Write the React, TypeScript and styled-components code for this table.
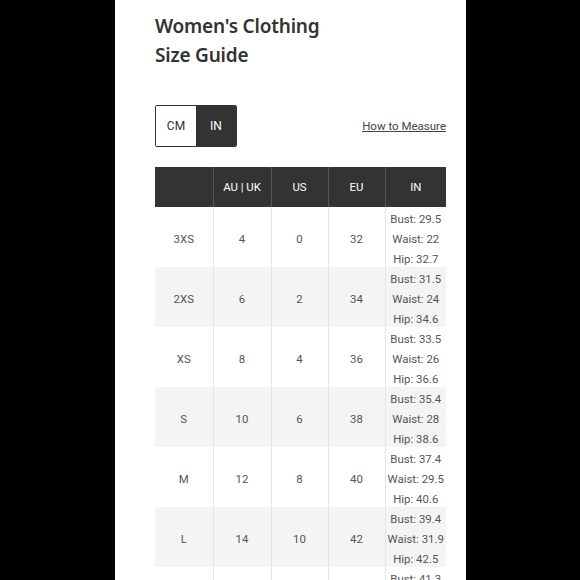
import styled, { createGlobalStyle } from "styled-components";

const GlobalStyle = createGlobalStyle`
  html, body {
    margin: 0;
    padding: 0;
    background: #000;
    height: 100%;
    overflow: hidden;
  }
`;

const Page = styled.div`
  display: flex;
  justify-content: center;
  background: #000;
  min-height: 580px;
`;

const Panel = styled.div`
  width: 351px;
  margin-left: 1px;
  background: #fff;
  padding: 12px 20px 0 40px;
  box-sizing: border-box;
  min-height: 580px;
`;

const Title = styled.h1`
  margin: 0;
  font-family: "Noto Sans", sans-serif;
  font-weight: 600;
  font-size: 19px;
  line-height: 29px;
  color: #333;
  letter-spacing: -0.2px;
`;

const Controls = styled.div`
  display: flex;
  align-items: center;
  justify-content: space-between;
  margin-top: 35px;
`;

const Toggle = styled.div`
  display: flex;
  border: 1px solid #333;
  border-radius: 2px;
  overflow: hidden;
`;

const ToggleButton = styled.div<{ $active?: boolean }>`
  width: 40px;
  height: 40px;
  display: flex;
  align-items: center;
  justify-content: center;
  font-family: Roboto, sans-serif;
  font-size: 12px;
  color: ${(p) => (p.$active ? "#fff" : "#333")};
  background: ${(p) => (p.$active ? "#333" : "#fff")};
`;

const MeasureLink = styled.a`
  font-family: Roboto, sans-serif;
  font-size: 11.5px;
  color: #444;
  text-decoration: underline;
`;

const Table = styled.table`
  margin-top: 20px;
  width: 291px;
  border-collapse: collapse;
  table-layout: fixed;
  font-family: Roboto, sans-serif;
  font-size: 11.4px;
`;

const Th = styled.th`
  background: #333;
  color: #fff;
  font-weight: 400;
  height: 40px;
  padding: 0;
  border-left: 1px solid #555;
  &:first-child {
    border-left: none;
  }
`;

const Row = styled.tr<{ $shaded?: boolean }>`
  background: ${(p) => (p.$shaded ? "#f4f4f4" : "#fff")};
`;

const Td = styled.td`
  text-align: center;
  color: #555;
  padding: 0;
  height: 60px;
  line-height: 20px;
  border-left: 1px solid #e6e6e6;
  &:first-child {
    border-left: none;
  }
`;

const CellText = styled.div`
  margin: 2px 0 -2px;
`;

const sizes = [
  { size: "3XS", au: 4, us: 0, eu: 32, bust: "29.5", waist: "22", hip: "32.7" },
  { size: "2XS", au: 6, us: 2, eu: 34, bust: "31.5", waist: "24", hip: "34.6" },
  { size: "XS", au: 8, us: 4, eu: 36, bust: "33.5", waist: "26", hip: "36.6" },
  { size: "S", au: 10, us: 6, eu: 38, bust: "35.4", waist: "28", hip: "38.6" },
  { size: "M", au: 12, us: 8, eu: 40, bust: "37.4", waist: "29.5", hip: "40.6" },
  { size: "L", au: 14, us: 10, eu: 42, bust: "39.4", waist: "31.9", hip: "42.5" },
  { size: "XL", au: 16, us: 12, eu: 44, bust: "41.3", waist: "33.9", hip: "44.5" },
];

const App = () => {
  return (
    <Page>
      <GlobalStyle />
      <Panel>
        <Title>
          Women's Clothing
          <br />
          Size Guide
        </Title>
        <Controls>
          <Toggle>
            <ToggleButton>CM</ToggleButton>
            <ToggleButton $active>IN</ToggleButton>
          </Toggle>
          <MeasureLink href="#">How to Measure</MeasureLink>
        </Controls>
        <Table>
          <colgroup>
            <col style={{ width: 58 }} />
            <col style={{ width: 58 }} />
            <col style={{ width: 57 }} />
            <col style={{ width: 57 }} />
            <col style={{ width: 61 }} />
          </colgroup>
          <thead>
            <tr>
              <Th></Th>
              <Th>AU | UK</Th>
              <Th>US</Th>
              <Th>EU</Th>
              <Th>IN</Th>
            </tr>
          </thead>
          <tbody>
            {sizes.map((s, i) => (
              <Row key={s.size} $shaded={i % 2 === 1}>
                <Td><CellText>{s.size}</CellText></Td>
                <Td><CellText>{s.au}</CellText></Td>
                <Td><CellText>{s.us}</CellText></Td>
                <Td><CellText>{s.eu}</CellText></Td>
                <Td>
                  <CellText>
                    Bust: {s.bust}
                    <br />
                    Waist: {s.waist}
                    <br />
                    Hip: {s.hip}
                  </CellText>
                </Td>
              </Row>
            ))}
          </tbody>
        </Table>
      </Panel>
    </Page>
  );
};

export default App;
